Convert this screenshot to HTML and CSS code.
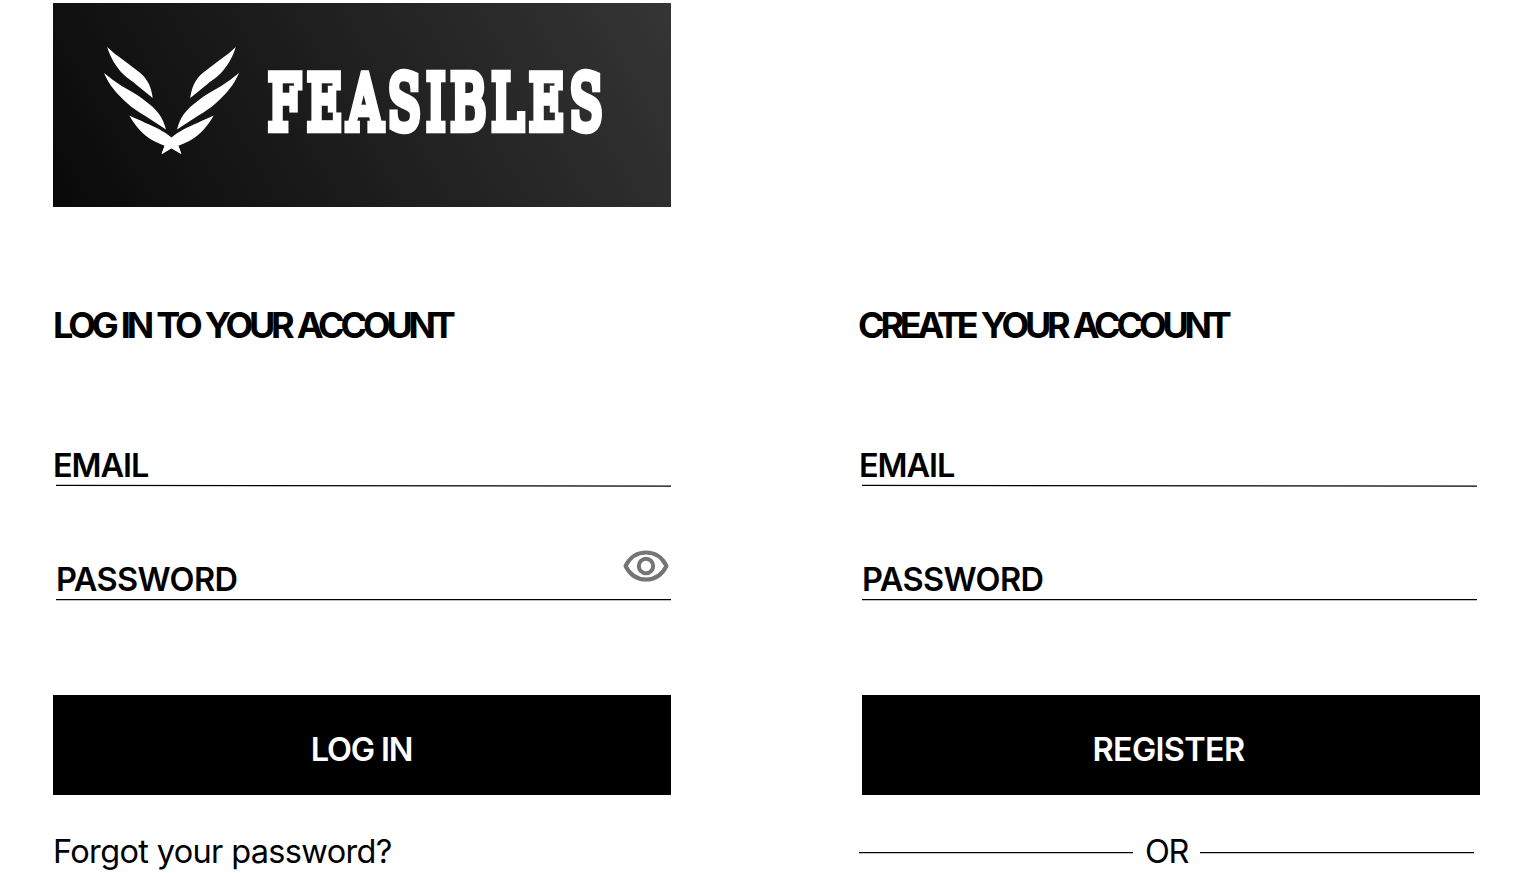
FILE: index.html
```
<!DOCTYPE html>
<html lang="en">

<head>
  <meta charset="UTF-8">
  <meta name="viewport" content="width=device-width, initial-scale=1.0">
  <title>Feasibles - Log in</title>
  <link rel="stylesheet" href="styles.css">
</head>

<body>
  <header class="brand">
    <svg class="brand-mark" viewBox="0 0 136 108" fill="#fff" aria-hidden="true">
      <g id="wing">
        <path d="M3.300 0C8 5 14 9 19.300 13L36 25.700C44 32 47.500 41 48.700 51L32.700 38C28 34 23 31 19.300 27.300C12 20 6 10 3.300 0Z"></path>
        <path d="M0 26C6 31 12 35 17.700 39C25 43 34 48 41 53.700C54 63 59 71 62 82.500L41 68.700C35 65 28 61 22.700 55.700C13 47 5 38 0 26Z"></path>
        <path d="M25.300 68.500C30 71 36 73 41 75.700C51 80 60 84 67.500 90.500C74 96 75.500 101 77 107L67.500 101.300L57.500 107L60.700 98.700C56 97 53 95.500 49.300 93.700C39 88 32 80 25.300 68.500Z"></path>
      </g>
      <use href="#wing" transform="translate(135 0) scale(-1 1)"></use>
    </svg>
    <svg class="brand-name" viewBox="0 0 340 64" role="img" aria-label="Feasibles">
      <text class="brand-text" x="2" y="59.500" textLength="340" lengthAdjust="spacingAndGlyphs">FEASIBLES</text>
    </svg>
  </header>

  <main class="forms">
    <form class="login">
      <h1 class="login-title">LOG IN TO YOUR ACCOUNT</h1>
      <div class="field email">
        <label for="login-email">EMAIL</label>
        <svg class="rule" viewBox="0 0 615 4"><path d="M0 1.300L615 2.200"></path></svg>
      </div>
      <div class="field password">
        <label for="login-password">PASSWORD</label>
        <svg class="eye" viewBox="0 0 46 32" fill="none" stroke="#757575" stroke-width="4" aria-hidden="true">
          <path d="M2.500 16C7 7 14 2.500 23 2.500S39 7 43.500 16C39 25 32 29.500 23 29.500S7 25 2.500 16Z" stroke-linejoin="round"></path>
          <circle cx="23" cy="16" r="7.200"></circle>
        </svg>
        <svg class="rule" viewBox="0 0 615 4"><path d="M0 1.650H615"></path></svg>
      </div>
      <button type="button" class="login-btn">LOG IN</button>
      <a class="forgot">Forgot your password?</a>
    </form>

    <form class="register">
      <h1 class="register-title">CREATE YOUR ACCOUNT</h1>
      <div class="field email">
        <label for="register-email">EMAIL</label>
        <svg class="rule" viewBox="0 0 615 4"><path d="M0 1.300L615 2.200"></path></svg>
      </div>
      <div class="field password">
        <label for="register-password">PASSWORD</label>
        <svg class="rule" viewBox="0 0 615 4"><path d="M0 1.650H615"></path></svg>
      </div>
      <button type="button" class="register-btn">REGISTER</button>
      <div class="divider">
        <svg class="divider-rule" viewBox="0 0 274 4"><path d="M0 2.650H274"></path></svg>
        <span>OR</span>
        <svg class="divider-rule" viewBox="0 0 274 4"><path d="M0 2.650H274"></path></svg>
      </div>
    </form>
  </main>
</body>

</html>
```
FILE: styles.css
```
* {
  margin: 0;
  padding: 0;
  box-sizing: border-box;
}

body {
  height: 873px;
  padding: 3px 51px 0 53px;
  overflow: hidden;
  background: #fff;
  color: #000;
  font-family: Inter, sans-serif;
}

.brand {
  display: flex;
  align-items: flex-start;
  gap: 26px;
  width: 618px;
  height: 204px;
  padding: 44px 0 0 51px;
  background: linear-gradient(60deg, #090909 0%, #1f1f1f 50%, #353535 100%);
}

.brand-mark {
  width: 136px;
  height: 108px;
}

.brand-name {
  width: 340px;
  height: 64px;
  margin-top: 22px;
  overflow: visible;
}

.brand-text {
  fill: #fff;
  stroke: #fff;
  stroke-width: 8.5px;
  font-family: "DejaVu Serif", serif;
  font-size: 75px;
  font-weight: 400;
  letter-spacing: 8px;
}

.forms {
  display: grid;
  grid-template-columns: 618px 621px;
  column-gap: 188px;
}

.login,
.register {
  display: flex;
  flex-direction: column;
}

h1 {
  height: 50px;
  margin-top: 93px;
  font-size: 36px;
  font-weight: 700;
  line-height: 50px;
  white-space: nowrap;
  word-spacing: 2px;
}

.login-title {
  letter-spacing: -4.2px;
}

.register-title {
  margin-left: -1px;
  letter-spacing: -4.2px;
}

.field {
  display: flex;
  flex-wrap: wrap;
  justify-content: space-between;
  align-items: flex-end;
  align-content: flex-end;
  width: 615px;
  margin-left: 3px;
}

.field label {
  font-size: 32.5px;
  font-weight: 600;
  line-height: 36px;
}

.email {
  height: 138px;
}

.email label {
  margin-left: -3px;
  letter-spacing: -1.1px;
}

.password {
  height: 114px;
}

.password label {
  letter-spacing: -0.6px;
}

.rule {
  width: 615px;
  height: 4px;
}

.rule path,
.divider-rule path {
  stroke: #000;
  stroke-width: 1.3px;
}

.eye {
  width: 46px;
  height: 32px;
  margin: 0 2px 16px 0;
}

button {
  width: 618px;
  height: 100px;
  margin-top: 93px;
  padding-top: 8px;
  border: none;
  background: #000;
  color: #fff;
  font-family: inherit;
  font-size: 32.5px;
  font-weight: 600;
  cursor: pointer;
}

.login-btn {
  padding-right: 1px;
  letter-spacing: -1.2px;
}

.register .field,
.register-btn {
  margin-left: 3px;
}

.register-btn {
  padding-right: 5px;
  letter-spacing: -0.7px;
}

.forgot {
  margin-top: 34px;
  font-size: 32.5px;
  line-height: 46px;
  letter-spacing: -0.65px;
}

.divider {
  display: flex;
  align-items: center;
  justify-content: space-between;
  width: 615px;
  height: 46px;
  margin-top: 34px;
  font-size: 32.5px;
  line-height: 44px;
  letter-spacing: -1.5px;
}

.divider-rule {
  width: 274px;
  height: 4px;
}
```
